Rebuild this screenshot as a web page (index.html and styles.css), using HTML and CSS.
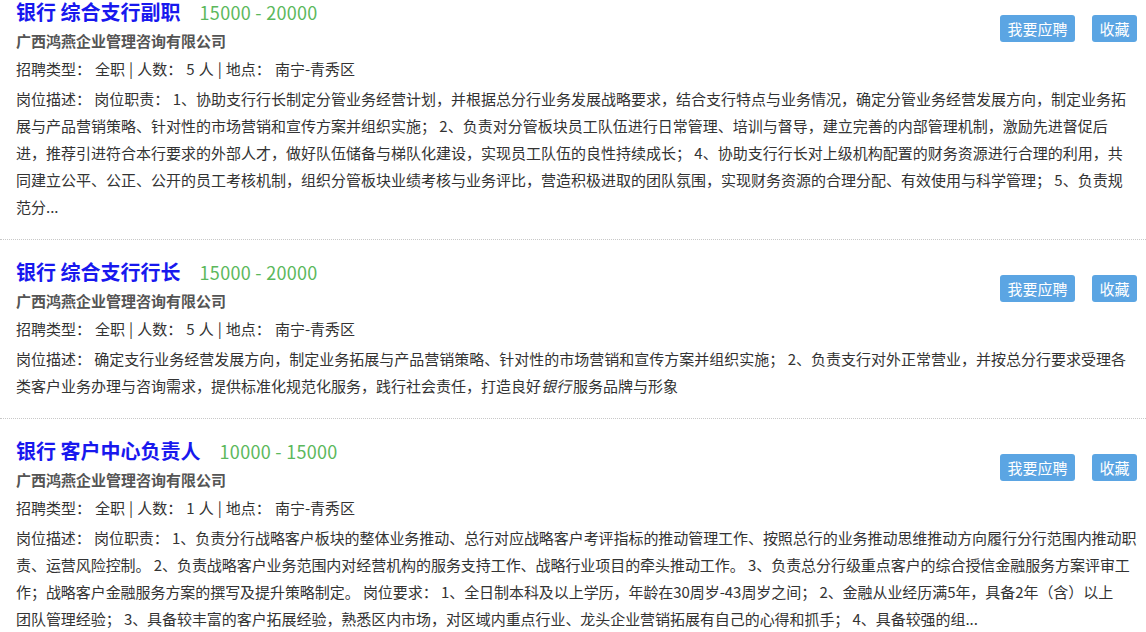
FILE: index.html
```html
<!DOCTYPE html>
<html lang="zh-CN">
<head>
<meta charset="utf-8">
<title>职位列表</title>
<link rel="stylesheet" href="styles.css">
</head>
<body>
<div class="job-list">
  <div class="job">
    <div class="job-head">
      <div class="job-main">
        <div class="job-title"><span class="job-name">银行 综合支行副职</span><span class="salary">15000 - 20000</span></div>
        <div class="company">广西鸿燕企业管理咨询有限公司</div>
      </div>
      <div class="actions">
        <a class="btn">我要应聘</a>
        <a class="btn">收藏</a>
      </div>
    </div>
    <div class="info">招聘类型： 全职 | 人数： 5 人 | 地点： 南宁-青秀区</div>
    <div class="desc">岗位描述： 岗位职责： 1、协助支行行长制定分管业务经营计划，并根据总分行业务发展战略要求，结合支行特点与业务情况，确定分管业务经营发展方向，制定业务拓展与产品营销策略、针对性的市场营销和宣传方案并组织实施； 2、负责对分管板块员工队伍进行日常管理、培训与督导，建立完善的内部管理机制，激励先进督促后进，推荐引进符合本行要求的外部人才，做好队伍储备与梯队化建设，实现员工队伍的良性持续成长； 4、协助支行行长对上级机构配置的财务资源进行合理的利用，共同建立公平、公正、公开的员工考核机制，组织分管板块业绩考核与业务评比，营造积极进取的团队氛围，实现财务资源的合理分配、有效使用与科学管理； 5、负责规范分...</div>
  </div>
  <div class="job">
    <div class="job-head">
      <div class="job-main">
        <div class="job-title"><span class="job-name">银行 综合支行行长</span><span class="salary">15000 - 20000</span></div>
        <div class="company">广西鸿燕企业管理咨询有限公司</div>
      </div>
      <div class="actions">
        <a class="btn">我要应聘</a>
        <a class="btn">收藏</a>
      </div>
    </div>
    <div class="info">招聘类型： 全职 | 人数： 5 人 | 地点： 南宁-青秀区</div>
    <div class="desc">岗位描述： 确定支行业务经营发展方向，制定业务拓展与产品营销策略、针对性的市场营销和宣传方案并组织实施； 2、负责支行对外正常营业，并按总分行要求受理各类客户业务办理与咨询需求，提供标准化规范化服务，践行社会责任，打造良好<em>银行</em>服务品牌与形象</div>
  </div>
  <div class="job">
    <div class="job-head">
      <div class="job-main">
        <div class="job-title"><span class="job-name">银行 客户中心负责人</span><span class="salary">10000 - 15000</span></div>
        <div class="company">广西鸿燕企业管理咨询有限公司</div>
      </div>
      <div class="actions">
        <a class="btn">我要应聘</a>
        <a class="btn">收藏</a>
      </div>
    </div>
    <div class="info">招聘类型： 全职 | 人数： 1 人 | 地点： 南宁-青秀区</div>
    <div class="desc desc-tight">岗位描述： 岗位职责： 1、负责分行战略客户板块的整体业务推动、总行对应战略客户考评指标的推动管理工作、按照总行的业务推动思维推动方向履行分行范围内推动职责、运营风险控制。 2、负责战略客户业务范围内对经营机构的服务支持工作、战略行业项目的牵头推动工作。 3、负责总分行级重点客户的综合授信金融服务方案评审工作；战略客户金融服务方案的撰写及提升策略制定。 岗位要求： 1、全日制本科及以上学历，年龄在30周岁-43周岁之间； 2、金融从业经历满5年，具备2年（含）以上<span class="nw">团队</span>管理经验； 3、具备较丰富的客户拓展经验，熟悉区内市场，对区域内重点行业、龙头企业营销拓展有自己的心得和抓手； 4、具备较强的组...</div>
  </div>
</div>
</body>
</html>
```

FILE: styles.css
```css
* { box-sizing: border-box; }
html, body {
  margin: 0;
  padding: 0;
  background: #fff;
  overflow: hidden;
}
body {
  font-family: "Noto Sans CJK SC", "Noto Sans", sans-serif;
  font-size: 15px;
  color: #333;
}
.job-list {
  margin-top: -20px;
}
.job {
  padding: 18px 9px 19px 16px;
  border-bottom: 1px dotted #c8c8c8;
}
.job-head {
  display: flex;
  align-items: flex-start;
  justify-content: space-between;
}
.job-title {
  display: flex;
  align-items: baseline;
  height: 29px;
  line-height: 27px;
}
.job-name {
  font-size: 20px;
  font-weight: bold;
  color: #1818ee;
}
.salary {
  font-size: 18px;
  letter-spacing: 0.3px;
  color: #5cb85c;
  margin-left: 19px;
}
.company {
  font-weight: bold;
  color: #555;
  line-height: 28px;
}
.actions {
  display: flex;
  gap: 17px;
  margin-top: 17px;
}
.btn {
  display: block;
  height: 27px;
  line-height: 27px;
  padding: 0 7.5px;
  font-size: 15px;
  color: #fff;
  background: #5ba5e3;
  border-radius: 3px;
  cursor: pointer;
}
.info {
  line-height: 28px;
  word-spacing: 0.7px;
}
.desc {
  margin-top: 2px;
  line-height: 27px;
}
.desc-tight {
  letter-spacing: -0.06px;
}
.nw {
  white-space: nowrap;
}
.desc em {
  font-style: italic;
  padding-right: 2px;
}
```
